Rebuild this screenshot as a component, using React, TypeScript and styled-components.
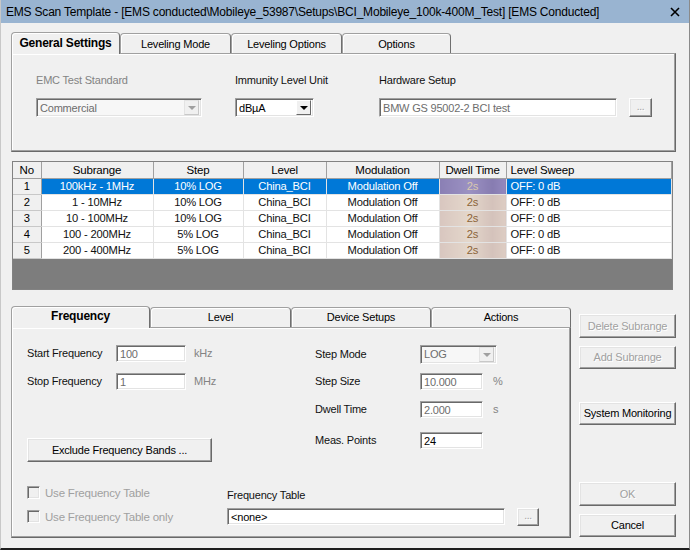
import styled, { createGlobalStyle, css } from "styled-components";

const GlobalStyle = createGlobalStyle`
  html, body { margin: 0; padding: 0; background: #ffffff; }
  body {
    font-family: "Liberation Sans", Arial, sans-serif;
    font-size: 11px;
    letter-spacing: -0.2px;
    color: #000;
  }
  * { box-sizing: border-box; }
`;

const Window = styled.div`
  width: 690px;
  height: 550px;
  background: #f0f0f0;
  border-left: 1px solid #c8c8c8;
  border-right: 1px solid #8a8a8a;
  border-bottom: 2px solid #1e1e1e;
  display: flex;
  flex-direction: column;
  overflow: hidden;
`;

const TitleBar = styled.div`
  height: 23px;
  flex: none;
  background: #99b4d1;
  display: flex;
  align-items: center;
  justify-content: space-between;
  padding: 0 9px 0 5px;
  font-size: 12px;
  white-space: nowrap;
`;

const Body = styled.div`
  padding: 9px 0 0 10px;
  display: flex;
  flex-direction: column;
`;

/* ---------- tabs ---------- */

const TabRow = styled.div`
  display: flex;
  align-items: flex-end;
  height: 21px;
  position: relative;
  z-index: 1;
`;

const Tab = styled.div<{ $w: number; $active?: boolean }>`
  width: ${({ $w }) => $w}px;
  height: ${({ $active }) => ($active ? 22 : 20)}px;
  margin-bottom: ${({ $active }) => ($active ? -1 : 0)}px;
  display: flex;
  align-items: center;
  justify-content: center;
  background: #f0f0f0;
  border: 1px solid #a0a0a0;
  border-right-color: #6f6f6f;
  border-bottom: none;
  border-radius: 4px 4px 0 0;
  box-shadow: inset 1px 1px 0 #ffffff;
  font-size: 11px;
  padding-bottom: ${({ $active }) => ($active ? 2 : 0)}px;
  ${({ $active }) =>
    $active &&
    css`
      font-weight: bold;
      font-size: 12px;
    `}
`;

const Panel = styled.div<{ $w: number; $h: number }>`
  width: ${({ $w }) => $w}px;
  height: ${({ $h }) => $h}px;
  border: 1px solid;
  border-color: #a0a0a0 #696969 #696969 #a0a0a0;
  box-shadow: inset -1px -1px 0 #a0a0a0, inset 1px 1px 0 #ffffff;
  background: #f0f0f0;
`;

/* ---------- form parts ---------- */

const TopContent = styled.div`
  display: flex;
  padding: 18px 0 0 24px;
`;

const FieldGroup = styled.div<{ $w: number; $mr?: number }>`
  width: ${({ $w }) => $w}px;
  margin-right: ${({ $mr }) => $mr ?? 0}px;
  display: flex;
  flex-direction: column;
  gap: 10px;
`;

const Label = styled.div<{ $w?: number; $disabled?: boolean; $ml?: number }>`
  ${({ $w }) => $w && `width: ${$w}px;`}
  margin-left: ${({ $ml }) => $ml ?? 0}px;
  line-height: 16px;
  white-space: nowrap;
  color: ${({ $disabled }) => ($disabled ? "#838383" : "#111")};
`;

const sunken = css`
  border: 1px solid;
  border-color: #a0a0a0 #ffffff #ffffff #a0a0a0;
  box-shadow: inset 1px 1px 0 #696969, inset -1px -1px 0 #e3e3e3;
`;

const TextBox = styled.div<{ $w: number; $h?: number; $dim?: boolean }>`
  ${sunken}
  width: ${({ $w }) => $w}px;
  height: ${({ $h }) => $h ?? 17}px;
  background: #ffffff;
  padding: 1px 0 0 3px;
  line-height: ${({ $h }) => ($h ?? 17) - 3}px;
  color: ${({ $dim }) => ($dim ? "#6d6d6d" : "#000")};
  white-space: nowrap;
  overflow: hidden;
`;

const SelectBox = styled.div<{ $w: number; $disabled?: boolean }>`
  ${sunken}
  width: ${({ $w }) => $w}px;
  height: 19px;
  background: ${({ $disabled }) => ($disabled ? "#f7f7f7" : "#ffffff")};
  display: flex;
  align-items: center;
  justify-content: space-between;
  padding: 2px 2px 2px 3px;
  color: ${({ $disabled }) => ($disabled ? "#6d6d6d" : "#000")};
`;

const ArrowButton = styled.div<{ $disabled?: boolean }>`
  width: 15px;
  height: 15px;
  display: flex;
  align-items: center;
  justify-content: center;
  background: #f0f0f0;
  border: 1px solid;
  border-color: ${({ $disabled }) =>
    $disabled ? "#e3e3e3 #c8c8c8 #c8c8c8 #e3e3e3" : "#ffffff #696969 #696969 #ffffff"};
  &::after {
    content: "";
    border-left: 4px solid transparent;
    border-right: 4px solid transparent;
    border-top: 4px solid ${({ $disabled }) => ($disabled ? "#a0a0a0" : "#000")};
    margin-top: 1px;
  }
`;

const Button = styled.button<{ $w: number; $h?: number; $mt?: number; $ml?: number }>`
  width: ${({ $w }) => $w}px;
  height: ${({ $h }) => $h ?? 24}px;
  margin-top: ${({ $mt }) => $mt ?? 0}px;
  margin-left: ${({ $ml }) => $ml ?? 0}px;
  flex: none;
  padding: 0;
  font-family: inherit;
  font-size: 11px;
  letter-spacing: -0.2px;
  white-space: nowrap;
  color: #000;
  background: #f0f0f0;
  border: 1px solid;
  border-color: #ffffff #696969 #696969 #ffffff;
  box-shadow: inset -1px -1px 0 #a0a0a0, inset 1px 1px 0 #e3e3e3;
  &:disabled {
    color: #a0a0a0;
    text-shadow: 1px 1px 0 #ffffff;
  }
`;

const DotsButton = styled(Button)`
  font-size: 10px;
  line-height: 10px;
  padding-bottom: 2px;
`;

const InlineRow = styled.div<{ $mt?: number }>`
  display: flex;
  align-items: center;
  margin-top: ${({ $mt }) => $mt ?? 0}px;
`;

/* ---------- grid ---------- */

const Grid = styled.div`
  margin: 9px 0 0 1px;
  width: 661px;
  border: 1px solid #828282;
  background: #7d7d7d;
`;

const GridTable = styled.table`
  border-collapse: collapse;
  table-layout: fixed;
  width: 659px;
`;

const HeadCell = styled.th<{ $align?: string }>`
  height: 16px;
  padding: 0 4px;
  font-weight: normal;
  font-size: 11.5px;
  line-height: 14px;
  background: #f0f0f0;
  border-right: 1px solid #a0a0a0;
  border-bottom: 1px solid #a0a0a0;
  text-align: ${({ $align }) => $align ?? "center"};
  white-space: nowrap;
`;

const Cell = styled.td<{ $align?: string; $sel?: boolean }>`
  height: 16px;
  padding: 0 4px;
  font-size: 11.2px;
  line-height: 14px;
  background: ${({ $sel }) => ($sel ? "#0078d7" : "#ffffff")};
  color: ${({ $sel }) => ($sel ? "#ffffff" : "#111")};
  border-right: 1px solid #e3e3e3;
  border-bottom: 1px solid #e3e3e3;
  text-align: ${({ $align }) => $align ?? "center"};
  white-space: nowrap;
`;

const NoCell = styled(Cell)`
  background: #f0f0f0;
  color: #000;
  border-right: 1px solid #a0a0a0;
  border-bottom: 1px solid #c8c8c8;
`;

const DwellCell = styled(Cell)`
  background: ${({ $sel }) =>
    $sel
      ? "linear-gradient(90deg, #8a7fb4, #9b91c2 45%, #877cb1 80%, #9488bd)"
      : "linear-gradient(90deg, #d8c6bf, #e4d7cb 45%, #d4c2bb 80%, #ddcdc3)"};
  color: ${({ $sel }) => ($sel ? "#d9c9ae" : "#8b6438")};
`;

const GrayArea = styled.div`
  height: 30px;
  background: #7d7d7d;
`;

/* ---------- bottom ---------- */

const BottomRow = styled.div`
  display: flex;
  margin-top: 16px;
`;

const BottomTabs = styled.div`
  width: 560px;
  display: flex;
  flex-direction: column;
`;

const BottomContent = styled.div`
  padding: 17px 0 0 15px;
  display: flex;
  flex-direction: column;
`;

const Columns = styled.div`
  display: flex;
`;

const Column = styled.div<{ $w?: number; $mt?: number }>`
  ${({ $w }) => $w && `width: ${$w}px;`}
  margin-top: ${({ $mt }) => $mt ?? 0}px;
  display: flex;
  flex-direction: column;
`;

const CheckRow = styled.div`
  height: 24px;
  display: flex;
  align-items: center;
  gap: 5px;
  color: #a0a0a0;
  font-size: 11.5px;
`;

const CheckBox = styled.span`
  ${sunken}
  width: 13px;
  height: 13px;
  background: #f0f0f0;
`;

const ButtonColumn = styled.div`
  width: 97px;
  margin-left: 8px;
  display: flex;
  flex-direction: column;
`;

const subranges = [
  { no: 1, range: "100kHz - 1MHz", step: "10% LOG" },
  { no: 2, range: "1 - 10MHz", step: "10% LOG" },
  { no: 3, range: "10 - 100MHz", step: "10% LOG" },
  { no: 4, range: "100 - 200MHz", step: "5% LOG" },
  { no: 5, range: "200 - 400MHz", step: "5% LOG" },
];

export default function App() {
  return (
    <>
      <GlobalStyle />
      <Window>
        <TitleBar>
          <span>
            {"EMS Scan Template - [EMS conducted\\Mobileye_53987\\Setups\\BCI_Mobileye_100k-400M_Test] [EMS Conducted]"}
          </span>
          <svg width="10" height="10" viewBox="0 0 10 10">
            <path d="M1 1 L9 9 M9 1 L1 9" stroke="#000" strokeWidth="1.6" />
          </svg>
        </TitleBar>

        <Body>
          <TabRow>
            <Tab $w={109} $active>General Settings</Tab>
            <Tab $w={111}>Leveling Mode</Tab>
            <Tab $w={111}>Leveling Options</Tab>
            <Tab $w={109}>Options</Tab>
          </TabRow>
          <Panel $w={665} $h={99}>
            <TopContent>
              <FieldGroup $w={166} $mr={33}>
                <Label $disabled>EMC Test Standard</Label>
                <SelectBox $w={166} $disabled>
                  <span>Commercial</span>
                  <ArrowButton $disabled />
                </SelectBox>
              </FieldGroup>
              <FieldGroup $w={79} $mr={65}>
                <Label>Immunity Level Unit</Label>
                <SelectBox $w={79}>
                  <span>dBµA</span>
                  <ArrowButton />
                </SelectBox>
              </FieldGroup>
              <FieldGroup $w={274}>
                <Label>Hardware Setup</Label>
                <InlineRow>
                  <TextBox $w={238} $h={19} $dim>BMW GS 95002-2 BCI test</TextBox>
                  <DotsButton $w={23} $h={19} $ml={12} disabled>...</DotsButton>
                </InlineRow>
              </FieldGroup>
            </TopContent>
          </Panel>

          <Grid>
            <GridTable>
              <colgroup>
                <col style={{ width: 28 }} />
                <col style={{ width: 112 }} />
                <col style={{ width: 90 }} />
                <col style={{ width: 83 }} />
                <col style={{ width: 113 }} />
                <col style={{ width: 67 }} />
                <col />
              </colgroup>
              <thead>
                <tr>
                  <HeadCell>No</HeadCell>
                  <HeadCell>Subrange</HeadCell>
                  <HeadCell>Step</HeadCell>
                  <HeadCell>Level</HeadCell>
                  <HeadCell>Modulation</HeadCell>
                  <HeadCell>Dwell Time</HeadCell>
                  <HeadCell $align="left">Level Sweep</HeadCell>
                </tr>
              </thead>
              <tbody>
                {subranges.map((r) => {
                  const sel = r.no === 1;
                  return (
                    <tr key={r.no}>
                      <NoCell>{r.no}</NoCell>
                      <Cell $sel={sel}>{r.range}</Cell>
                      <Cell $sel={sel}>{r.step}</Cell>
                      <Cell $sel={sel}>China_BCI</Cell>
                      <Cell $sel={sel}>Modulation Off</Cell>
                      <DwellCell $sel={sel}>2s</DwellCell>
                      <Cell $sel={sel} $align="left">OFF: 0 dB</Cell>
                    </tr>
                  );
                })}
              </tbody>
            </GridTable>
            <GrayArea />
          </Grid>

          <BottomRow>
            <BottomTabs>
              <TabRow>
                <Tab $w={139} $active>Frequency</Tab>
                <Tab $w={141}>Level</Tab>
                <Tab $w={140}>Device Setups</Tab>
                <Tab $w={140}>Actions</Tab>
              </TabRow>
              <Panel $w={560} $h={211}>
                <BottomContent>
                  <Columns>
                    <Column $w={288}>
                      <InlineRow>
                        <Label $w={89}>Start Frequency</Label>
                        <TextBox $w={70} $dim>100</TextBox>
                        <Label $ml={8} $disabled>kHz</Label>
                      </InlineRow>
                      <InlineRow $mt={11}>
                        <Label $w={89}>Stop Frequency</Label>
                        <TextBox $w={70} $dim>1</TextBox>
                        <Label $ml={8} $disabled>MHz</Label>
                      </InlineRow>
                      <Button $w={185} $mt={48}>Exclude Frequency Bands ...</Button>
                    </Column>
                    <Column>
                      <InlineRow>
                        <Label $w={105}>Step Mode</Label>
                        <SelectBox $w={77} $disabled>
                          <span>LOG</span>
                          <ArrowButton $disabled />
                        </SelectBox>
                      </InlineRow>
                      <InlineRow $mt={9}>
                        <Label $w={105}>Step Size</Label>
                        <TextBox $w={63} $dim>10.000</TextBox>
                        <Label $ml={10} $disabled>%</Label>
                      </InlineRow>
                      <InlineRow $mt={11}>
                        <Label $w={105}>Dwell Time</Label>
                        <TextBox $w={63} $dim>2.000</TextBox>
                        <Label $ml={10} $disabled>s</Label>
                      </InlineRow>
                      <InlineRow $mt={14}>
                        <Label $w={105}>Meas. Points</Label>
                        <TextBox $w={63}>24</TextBox>
                      </InlineRow>
                    </Column>
                  </Columns>
                  <Columns>
                    <Column $w={200} $mt={19}>
                      <CheckRow>
                        <CheckBox />
                        Use Frequency Table
                      </CheckRow>
                      <CheckRow>
                        <CheckBox />
                        Use Frequency Table only
                      </CheckRow>
                    </Column>
                    <Column $mt={25}>
                      <Label>Frequency Table</Label>
                      <InlineRow $mt={5}>
                        <TextBox $w={278}>&lt;none&gt;</TextBox>
                        <DotsButton $w={22} $h={18} $ml={12} disabled>...</DotsButton>
                      </InlineRow>
                    </Column>
                  </Columns>
                </BottomContent>
              </Panel>
            </BottomTabs>

            <ButtonColumn>
              <Button $w={97} $mt={8} disabled>Delete Subrange</Button>
              <Button $w={97} $h={23} $mt={8} disabled>Add Subrange</Button>
              <Button $w={97} $h={23} $mt={33}>System Monitoring</Button>
              <Button $w={97} $mt={57} disabled>OK</Button>
              <Button $w={97} $h={23} $mt={8}>Cancel</Button>
            </ButtonColumn>
          </BottomRow>
        </Body>
      </Window>
    </>
  );
}
